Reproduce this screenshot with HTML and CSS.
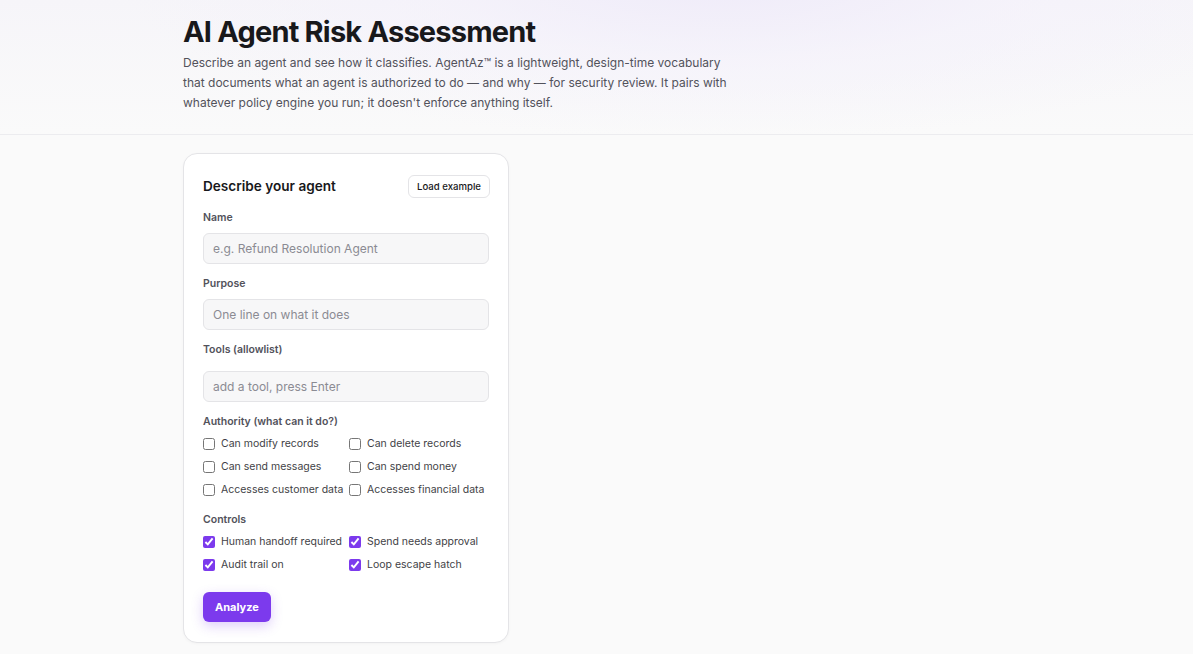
FILE: index.html
```html
<!DOCTYPE html>
<html lang="en">
<head>
  <meta charset="UTF-8" />
  <meta name="viewport" content="width=device-width, initial-scale=1.0"/>
  <title>AI Agent Risk Assessment</title>
  <link rel="stylesheet" href="styles.css">
</head>
<body>

  <header class="hero">
    <div class="wrap">
      <h1>AI Agent Risk Assessment</h1>
      <p class="lead">Describe an agent and see how it classifies. AgentAz™ is a lightweight, design-time vocabulary that documents what an agent is authorized to do — and why — for security review. It pairs with whatever policy engine you run; it doesn't enforce anything itself.</p>
    </div>
  </header>

  <main class="content">
    <form class="card">
      <div class="card-head">
        <h2>Describe your agent</h2>
        <button type="button" class="btn-ghost">Load example</button>
      </div>

      <label class="field-label" for="name">Name</label>
      <input class="input" id="name" type="text" placeholder="e.g. Refund Resolution Agent" />

      <label class="field-label" for="purpose">Purpose</label>
      <input class="input" id="purpose" type="text" placeholder="One line on what it does" />

      <label class="field-label tools-label" for="tool">Tools (allowlist)</label>
      <input class="input" id="tool" type="text" placeholder="add a tool, press Enter" />

      <div class="field-label">Authority (what can it do?)</div>
      <div class="checks">
        <label class="check"><input type="checkbox" /> Can modify records</label>
        <label class="check"><input type="checkbox" /> Can delete records</label>
        <label class="check"><input type="checkbox" /> Can send messages</label>
        <label class="check"><input type="checkbox" /> Can spend money</label>
        <label class="check"><input type="checkbox" /> Accesses customer data</label>
        <label class="check"><input type="checkbox" /> Accesses financial data</label>
      </div>

      <div class="field-label">Controls</div>
      <div class="checks">
        <label class="check"><input type="checkbox" checked /> Human handoff required</label>
        <label class="check"><input type="checkbox" checked /> Spend needs approval</label>
        <label class="check"><input type="checkbox" checked /> Audit trail on</label>
        <label class="check"><input type="checkbox" checked /> Loop escape hatch</label>
      </div>

      <button type="button" class="btn-primary">Analyze</button>
    </form>
  </main>

</body>
</html>
```

FILE: styles.css
```css
* {
  box-sizing: border-box;
  margin: 0;
  padding: 0;
}

html, body {
  background-color: #fafafa;
  font-family: Inter, "Noto Sans", sans-serif;
  color: #18181b;
}

.wrap {
  padding: 0 183px;
}

.hero {
  background:
    radial-gradient(ellipse 600px 160px at 720px -20px, #efebf9 0%, rgba(244, 241, 251, 0.6) 50%, rgba(250, 250, 250, 0) 100%),
    linear-gradient(180deg, #f6f5f9 0%, #fafafa 100%);
  border-bottom: 1px solid #ececef;
  padding: 14px 0 21px;
}

.hero h1 {
  font-size: 29px;
  font-weight: 700;
  letter-spacing: -0.8px;
  line-height: 36px;
  color: #18181b;
}

.lead {
  max-width: 548px;
  margin-top: 3px;
  font-size: 12px;
  line-height: 20px;
  color: #52525b;
}

.content {
  padding: 18px 183px 12px;
}

.card {
  width: 326px;
  background: #fff;
  border: 1px solid #e4e4e7;
  border-radius: 14px;
  padding: 20px 19px 20px;
  box-shadow: 0 1px 3px rgba(0, 0, 0, 0.03);
  display: flex;
  flex-direction: column;
}

.card-head {
  display: flex;
  align-items: center;
  justify-content: space-between;
  height: 24px;
  margin-bottom: 12px;
}

.card-head h2 {
  font-size: 13.6px;
  font-weight: 600;
  color: #18181b;
}

.btn-ghost {
  font-family: inherit;
  font-size: 9.6px;
  font-weight: 500;
  color: #18181b;
  background: #fff;
  border: 1px solid #e4e4e7;
  border-radius: 6px;
  height: 23px;
  padding: 0 8px;
  margin-right: -1px;
  cursor: pointer;
}

.field-label {
  font-size: 10.5px;
  font-weight: 600;
  line-height: 16px;
  color: #52525b;
  margin-bottom: 7px;
}

.tools-label {
  margin-bottom: 13px;
}

.input {
  font-family: inherit;
  font-size: 12px;
  height: 31px;
  padding: 0 9px;
  background: #f7f7f8;
  border: 1px solid #e4e4e7;
  border-radius: 6px;
  color: #18181b;
  margin-bottom: 12px;
  outline: none;
}

.input::placeholder {
  color: #8b8b93;
}

.checks {
  display: grid;
  grid-template-columns: 139px 139px;
  column-gap: 7px;
  row-gap: 6px;
  margin-top: -2px;
  margin-bottom: 14px;
}

.check {
  display: flex;
  align-items: center;
  gap: 6px;
  font-size: 10.5px;
  line-height: 17px;
  color: #3f3f46;
  white-space: nowrap;
}

.check input {
  width: 12px;
  height: 12px;
  margin: 0;
  accent-color: #7c3aed;
}

.checks:last-of-type {
  margin-bottom: 19px;
}

.btn-primary {
  align-self: flex-start;
  font-family: inherit;
  font-size: 11px;
  font-weight: 700;
  color: #fff;
  background: #7c3aed;
  border: none;
  border-radius: 6px;
  height: 30px;
  padding: 0 12px;
  box-shadow: 0 4px 12px rgba(124, 58, 237, 0.25);
  cursor: pointer;
}
```
